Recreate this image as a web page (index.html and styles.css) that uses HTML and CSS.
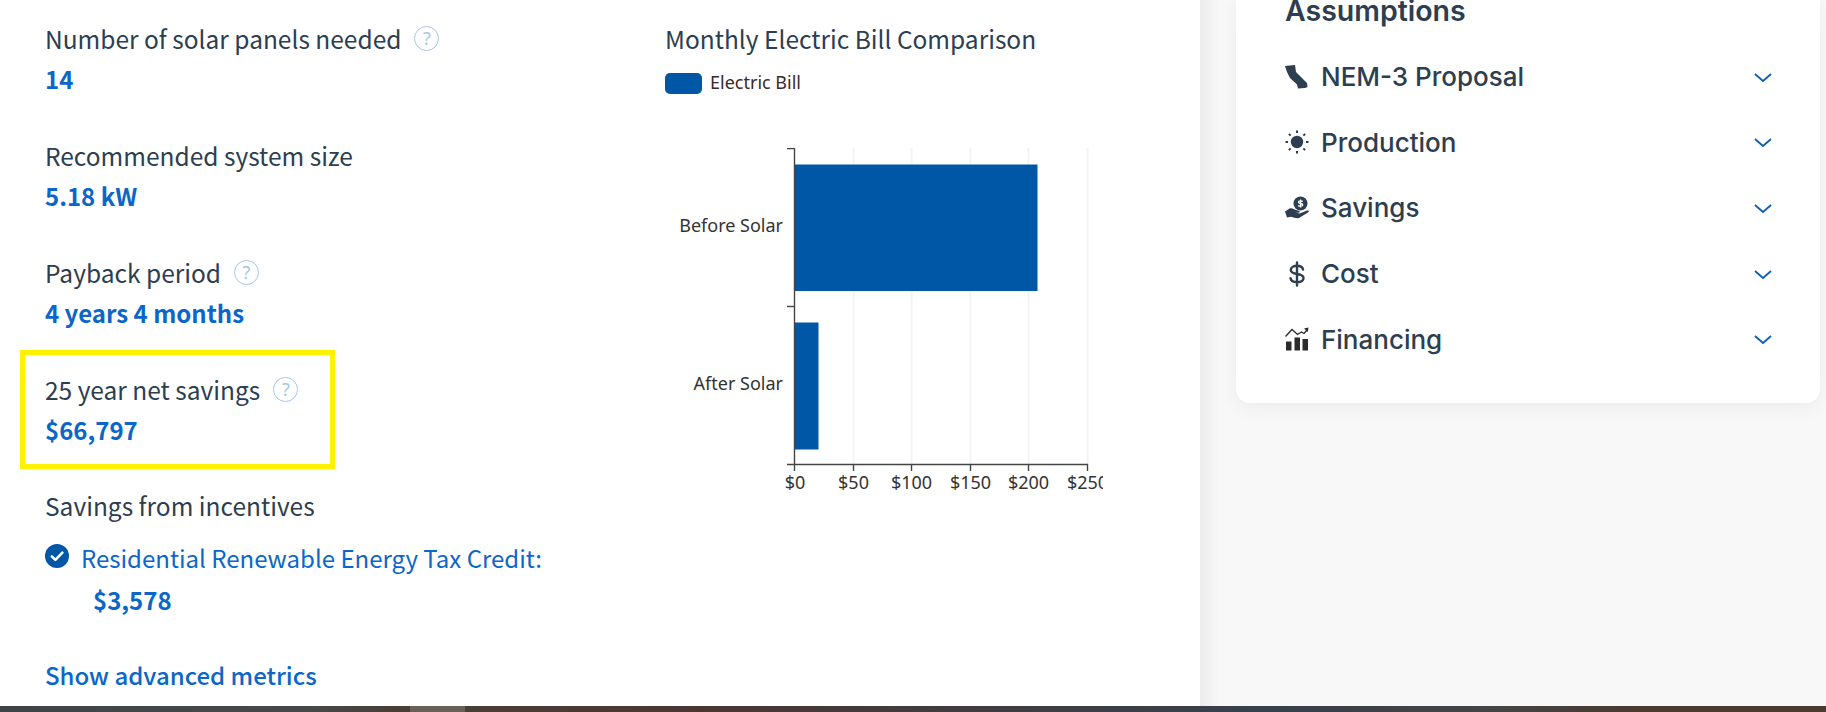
FILE: index.html
```html
<!DOCTYPE html>
<html lang="en">
<head>
<meta charset="utf-8">
<title>Solar results</title>
<link rel="stylesheet" href="styles.css">
</head>
<body>
<div class="page">
  <main class="results">
    <section class="metrics">
      <div class="metric">
        <div class="label">Number of solar panels needed <span class="help">?</span></div>
        <div class="value">14</div>
      </div>
      <div class="metric">
        <div class="label">Recommended system size</div>
        <div class="value">5.18 kW</div>
      </div>
      <div class="metric">
        <div class="label">Payback period <span class="help">?</span></div>
        <div class="value">4 years 4 months</div>
      </div>
      <div class="metric highlighted">
        <div class="label">25 year net savings <span class="help">?</span></div>
        <div class="value">$66,797</div>
      </div>
      <div class="metric incentives">
        <div class="label">Savings from incentives</div>
        <div class="incentive">
          <svg class="check" viewBox="0 0 24 24" aria-hidden="true"><circle cx="12" cy="12" r="12" fill="#0057a6"/><path d="M6.8 12.4l3.6 3.5 7-7.2" fill="none" stroke="#fff" stroke-width="2.6" stroke-linecap="round" stroke-linejoin="round"/></svg>
          <span class="incentive-name">Residential Renewable Energy Tax Credit:</span>
        </div>
        <div class="value indented">$3,578</div>
      </div>
      <a class="advanced" href="#">Show advanced metrics</a>
    </section>
    <section class="chart">
      <h2 class="chart-title">Monthly Electric Bill Comparison</h2>
      <div class="legend"><span class="swatch"></span><span class="legend-text">Electric Bill</span></div>
      <svg class="plot" viewBox="0 0 438 390" width="438" height="390" aria-label="Bar chart">
        <g class="grid">
          <line x1="188.500" y1="0" x2="188.500" y2="316"/>
          <line x1="246.500" y1="0" x2="246.500" y2="316"/>
          <line x1="305.500" y1="0" x2="305.500" y2="316"/>
          <line x1="363.500" y1="0" x2="363.500" y2="316"/>
          <line x1="422.500" y1="0" x2="422.500" y2="316"/>
        </g>
        <rect class="bar" x="129.500" y="16.500" width="243" height="126.500"/>
        <rect class="bar" x="129.500" y="174.500" width="24" height="127"/>
        <g class="axis">
          <path d="M122 0.500H129.500V316.500"/>
          <path d="M122 158.500H129.500"/>
          <path d="M122 316.500H422.500V323"/>
          <path d="M129.500 316.500V323M188.500 316.500V323M246.500 316.500V323M305.500 316.500V323M363.500 316.500V323"/>
        </g>
        <g class="ylabels">
          <text x="118" y="84">Before Solar</text>
          <text x="118" y="242">After Solar</text>
        </g>
        <g class="xlabels">
          <text x="130" y="341">$0</text>
          <text x="188.500" y="341">$50</text>
          <text x="246.500" y="341">$100</text>
          <text x="305.500" y="341">$150</text>
          <text x="363.500" y="341">$200</text>
          <text x="422.500" y="341">$250</text>
        </g>
      </svg>
    </section>
  </main>
  <aside class="side">
    <div class="card">
      <h2 class="card-title">Assumptions</h2>
      <div class="row">
        <svg class="icon" viewBox="0 0 24 24" aria-hidden="true"><path d="M0 1L10 0 11 7 22 18 22.500 22 20 23 13 23.500 12 19.500 5 13 2 7Z" fill="#2c3e50"/></svg>
        <span class="row-name">NEM-3 Proposal</span>
        <svg class="chev" viewBox="0 0 18 10" aria-hidden="true"><path d="M1 1l8 7 8-7"/></svg>
      </div>
      <div class="row">
        <svg class="icon" viewBox="0 0 24 24" aria-hidden="true"><circle cx="12" cy="12" r="6.200" fill="#2c3e50"/><path d="M12 0.500V3M12 21V23.500M0.500 12H3M21 12H23.500M3.900 3.900L5.600 5.600M18.400 18.400L20.100 20.100M3.900 20.100L5.600 18.400M18.400 5.600L20.100 3.900" stroke="#2c3e50" stroke-width="2" fill="none"/></svg>
        <span class="row-name">Production</span>
        <svg class="chev" viewBox="0 0 18 10" aria-hidden="true"><path d="M1 1l8 7 8-7"/></svg>
      </div>
      <div class="row">
        <svg class="icon" viewBox="0 0 24 24" aria-hidden="true"><circle cx="15.500" cy="7.500" r="7" fill="#2c3e50"/><path d="M15.600 3.500V11.500M17.800 5.500C17 4.600 13.400 4.500 13.500 6.200 13.600 8 17.900 7 17.800 9 17.700 10.500 14 10.500 13.200 9.500" stroke="#fff" stroke-width="1.300" fill="none"/><path d="M0 15.500L4.500 12.500C7 11.500 9 13 11 14L14 14.700C15.500 15.500 14.500 17 13 16.800L10 16.500 14.500 17.500 22 14.500C24 14 24.500 15.500 23 16.500L14 22C12 23 9 21.500 6 20.800L2 21.500Z" fill="#2c3e50"/></svg>
        <span class="row-name">Savings</span>
        <svg class="chev" viewBox="0 0 18 10" aria-hidden="true"><path d="M1 1l8 7 8-7"/></svg>
      </div>
      <div class="row">
        <svg class="icon" viewBox="0 0 24 24" aria-hidden="true"><path d="M18 7.500C17.500 5 15 3.800 12 3.800 8.500 3.800 5.800 5.300 5.800 8 5.800 14 18.500 10 18.500 16 18.500 18.800 15.500 20.200 12 20.200 8.500 20.200 6 18.800 5.500 16.300M12 0.500V23.500" fill="none" stroke="#2c3e50" stroke-width="2.400" stroke-linecap="round"/></svg>
        <span class="row-name">Cost</span>
        <svg class="chev" viewBox="0 0 18 10" aria-hidden="true"><path d="M1 1l8 7 8-7"/></svg>
      </div>
      <div class="row">
        <svg class="icon" viewBox="0 0 24 24" aria-hidden="true"><path d="M1 14.500h5.500v9H1zM9.500 10.500h5.500v13H9.500zM17.500 12h5.500v11.500h-5.500z" fill="#2b2b2b"/><path d="M0.500 9.500L7 2.500 12.500 7.500 16.500 5 19 6.500 22 3" fill="none" stroke="#2b2b2b" stroke-width="1.300"/><path d="M19 1.500L23.500 0.500 22.800 5Z" fill="#2b2b2b"/></svg>
        <span class="row-name">Financing</span>
        <svg class="chev" viewBox="0 0 18 10" aria-hidden="true"><path d="M1 1l8 7 8-7"/></svg>
      </div>
    </div>
  </aside>
</div>
<div class="taskbar"><span class="taskbar-light"></span></div>
</body>
</html>
```

FILE: styles.css
```css
* { box-sizing: border-box; }
html, body { margin: 0; padding: 0; height: 712px; overflow: hidden; background: #fff; }
body { font-family: "Noto Sans CJK SC", "Noto Sans", sans-serif; color: #2c3e50; }

.page { display: flex; height: 706px; overflow: hidden; }

.results { width: 1200px; flex: none; background: #fff; display: flex; padding: 20px 0 0 45px; }
.metrics { width: 620px; flex: none; display: flex; flex-direction: column; }
.metric { height: 117px; position: relative; }
.label { font-size: 24.500px; line-height: 37px; display: flex; align-items: center; gap: 13px; }
.value { font-size: 24px; font-weight: 700; line-height: 36px; margin-top: 4px; color: #0b66c9; }
.help { width: 25px; height: 25px; border: 1px solid #a9c6e4; border-radius: 50%; color: #a9c6e4; font-size: 18px; line-height: 23px; text-align: center; font-family: "Noto Sans", sans-serif; }
.highlighted::after { content: ""; box-sizing: border-box; position: absolute; left: -25px; top: -21px; width: 315px; height: 119px; border: 5px solid #fff200; }
.incentives { height: 180px; }
.incentives .label { margin-top: -1px; }
.incentive { display: flex; align-items: center; gap: 12px; margin-top: 15px; }
.check { width: 24px; height: 24px; flex: none; margin-bottom: 4px; }
.incentive-name { font-size: 24px; line-height: 38px; color: #0b66c9; }
.indented { margin: 5px 0 0 48px; }
.advanced { font-size: 24px; line-height: 36px; font-weight: 500; color: #0b66c9; text-decoration: none; margin-top: -11px; }

.chart-title { margin: 0; font-size: 24.500px; font-weight: 400; line-height: 37px; }
.legend { display: flex; align-items: center; gap: 8px; margin-top: 15px; height: 22px; }
.swatch { width: 37px; height: 21px; border-radius: 5px; background: #0057a6; }
.legend-text { font-family: "Noto Sans", sans-serif; font-size: 18px; line-height: 22px; margin-top: -2px; color: #3a2a2a; }
.plot { display: block; margin-top: 54px; width: 438px; height: 390px; }
.grid line { stroke: #f4f4f4; stroke-width: 2; }
.bar { fill: #0057a6; }
.axis path { fill: none; stroke: #444; stroke-width: 1.400; }
.plot text { font-family: "Noto Sans", sans-serif; font-size: 18px; fill: #333; }
.ylabels text { text-anchor: end; }
.xlabels text { text-anchor: middle; }

.side { flex: 1; background: linear-gradient(90deg, #ececec 0, #f8f8f8 20px); padding: 0 6px 0 36px; }
.card { height: 403px; background: #fff; border-radius: 0 0 14px 14px; box-shadow: 0 4px 20px rgba(0,0,0,0.06); padding: 0 48px 0 49px; }
.card-title { margin: 0 0 22px; font-family: Inter, sans-serif; font-size: 28.500px; font-weight: 600; line-height: 22px; color: #2c3e50; }
.row { display: flex; align-items: center; height: 65.600px; }
.icon { width: 24px; height: 24px; flex: none; margin-right: 12px; overflow: visible; }
.row-name { font-family: Inter, sans-serif; font-size: 26px; font-weight: 500; flex: 1; color: #2c3e50; }
.chev { width: 18px; height: 10px; flex: none; margin-top: 2px; }
.chev path { fill: none; stroke: #0b5fb5; stroke-width: 1.800; }

.taskbar { height: 6px; position: relative; background: linear-gradient(90deg, #3e4446 0, #46494a 300px, #4a3e37 400px, #4a3733 700px, #3b3f48 1126px, #37404b 1260px, #454445 1500px, #4a3a30 1640px, #4a3a30 100%); }
.taskbar-light { position: absolute; left: 410px; top: 0; width: 55px; height: 6px; background: #6b6058; }
```
